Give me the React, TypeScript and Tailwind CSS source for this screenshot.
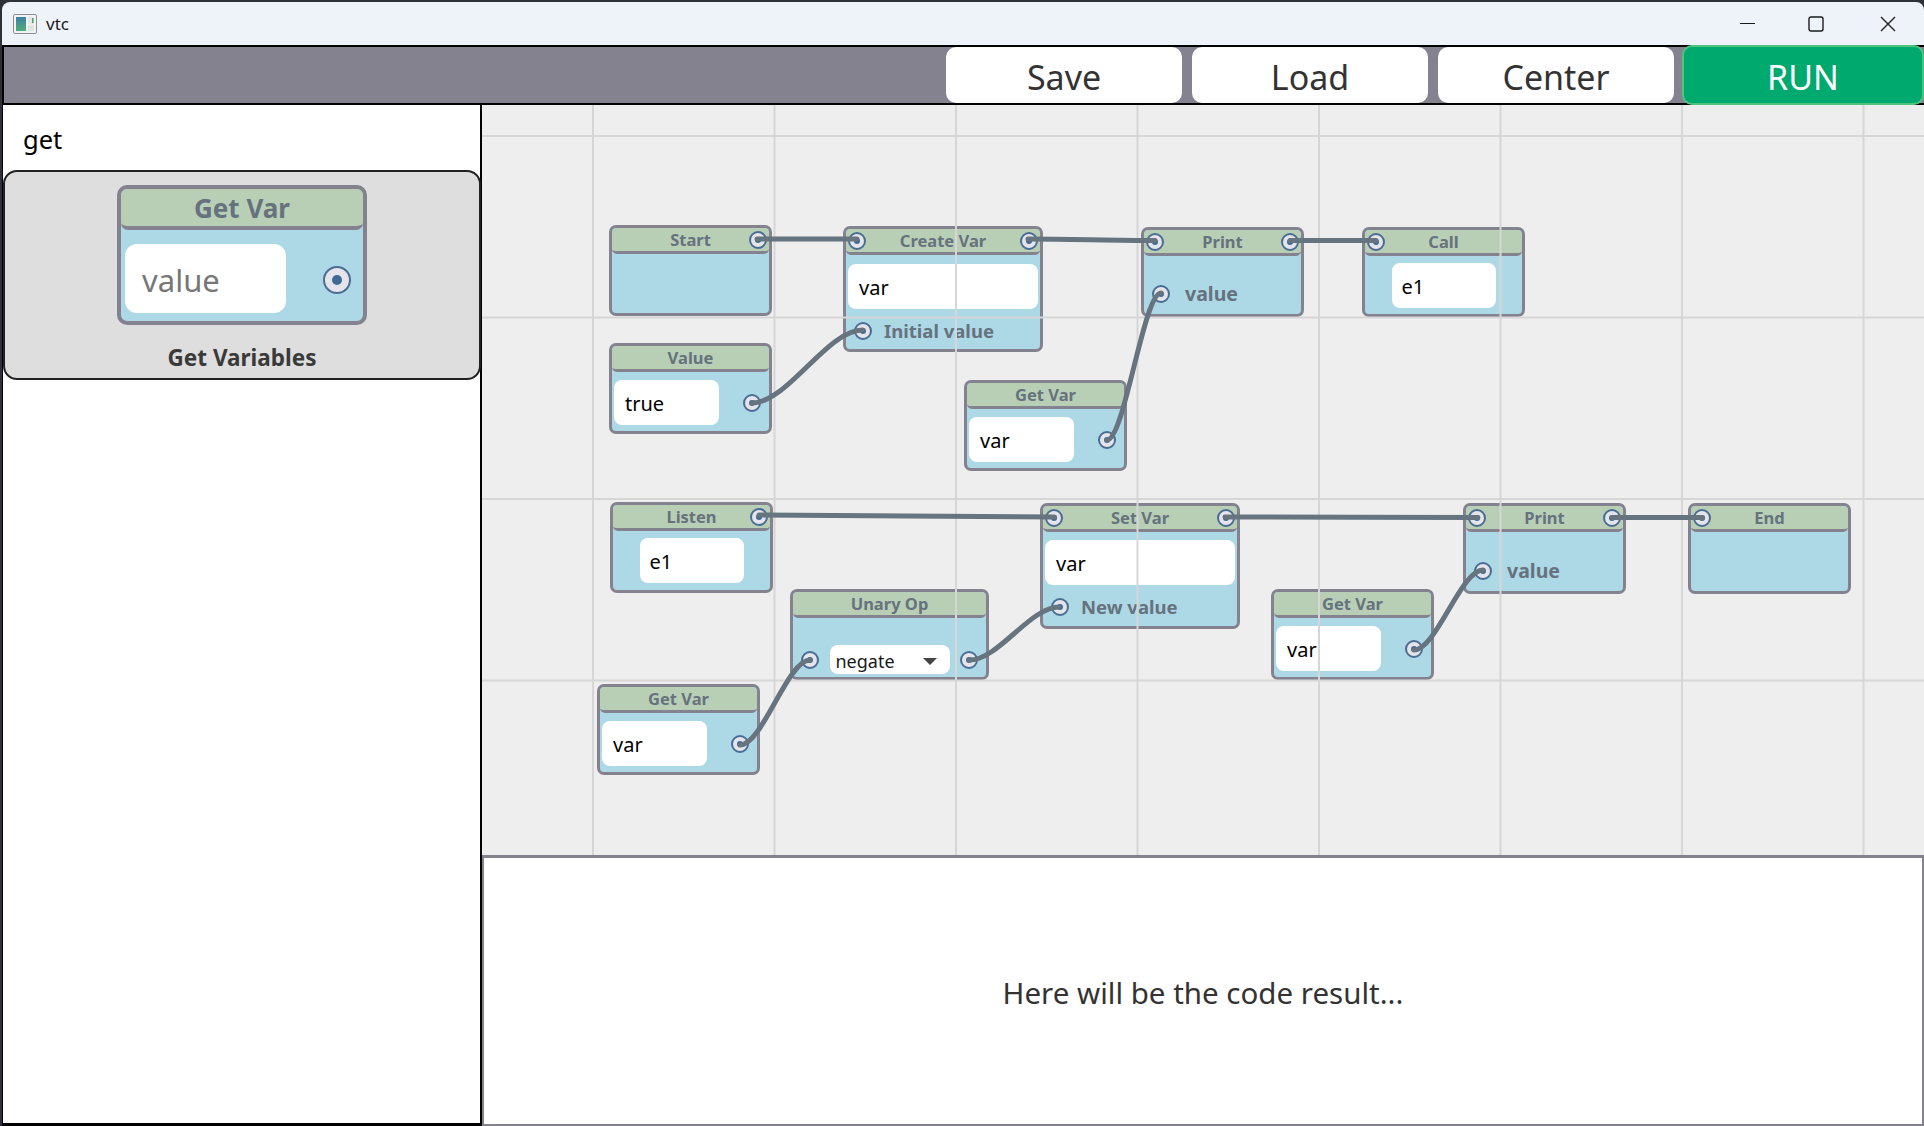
import React from 'react';

// canvas starts at x=482, y=105 of the window, wire coordinates are offset from here
const ORIGIN = { x: 482, y: 105 };

const wires: [number, number, number, number][] = [
  [757, 239, 857, 239],
  [1028, 239, 1155, 240.5],
  [1290, 240.5, 1376, 240.5],
  [752, 403, 862.5, 330],
  [1107, 440, 1161, 293],
  [759, 515, 1054.5, 517],
  [1225, 517, 1478, 517.5],
  [1612, 517.5, 1702.5, 517.5],
  [740, 745, 810, 660],
  [969.5, 660, 1059, 607],
  [1414, 650, 1483, 570],
];

const wirePath = ([x1, y1, x2, y2]: [number, number, number, number]) => {
  const ax = x1 - ORIGIN.x;
  const ay = y1 - ORIGIN.y;
  const bx = x2 - ORIGIN.x;
  const by = y2 - ORIGIN.y;
  const bend = (bx - ax) * 0.32;
  return `M${ax} ${ay} C${ax + bend} ${ay} ${bx - bend} ${by} ${bx} ${by}`;
};

const Port: React.FC = () => (
  <span className="flex h-[18px] w-[18px] shrink-0 items-center justify-center rounded-full border-2 border-[#4a6d94] bg-[#e4e4ea]">
    <span className="h-[6px] w-[6px] rounded-full bg-[#3f6a96]" />
  </span>
);

const Field: React.FC<{ value: string; className?: string }> = ({ value, className }) => (
  <div className={`flex h-[45px] items-center rounded-[8px] bg-white pt-[2px] text-[20px] text-black ${className ?? 'pl-[11px]'}`}>
    {value}
  </div>
);

interface NodeProps {
  title: string;
  className: string;
  input?: boolean;
  output?: boolean;
  children?: React.ReactNode;
}

const Node: React.FC<NodeProps> = ({ title, className, input, output, children }) => (
  <div className={`absolute flex flex-col rounded-[7px] border-[3px] border-[#84828e] bg-[#add8e6] ${className}`}>
    <div className="grid h-[26px] shrink-0 grid-cols-[18px_1fr_18px] items-center rounded-[5px] border-b-[3px] border-[#84828e] bg-[#b8cfb6] px-[2px]">
      <span>{input && <Port />}</span>
      <span className="pt-[1px] text-center text-[16.5px] leading-none font-bold text-[#66727e]">{title}</span>
      <span>{output && <Port />}</span>
    </div>
    {children}
  </div>
);

const PortLabel: React.FC<{ label: string; className: string }> = ({ label, className }) => (
  <div className={`flex items-center pl-[8px] font-bold text-[#66727e] ${className}`}>
    <Port />
    <span className="leading-none">{label}</span>
  </div>
);

const ValueBody: React.FC<{ value: string }> = ({ value }) => (
  <div className="mt-[8px] flex items-center justify-between pr-[8px] pl-[2px]">
    <Field value={value} className="w-[105px] pl-[11px]" />
    <Port />
  </div>
);

const ToolButton: React.FC<{ label: string }> = ({ label }) => (
  <button className="h-[56px] w-[236px] rounded-[10px] bg-white pt-[4px] text-[34px] leading-none text-[#333333]">{label}</button>
);

export default function App() {
  return (
    <div className="h-[1126px] w-[1924px] overflow-hidden bg-[#2e3238] pt-[2px] pl-[2px] font-['Noto_Sans',sans-serif]">
      <div className="flex h-full flex-col overflow-hidden rounded-tl-[8px] rounded-tr-[8px]">
        {/* title bar */}
        <div className="flex h-[43px] shrink-0 items-center bg-[#eef3f9] pr-[28px] pl-[11px]">
          <svg width="24" height="20" viewBox="0 0 24 20" className="shrink-0">
            <rect x="0.5" y="0.5" width="23" height="19" rx="1.5" fill="#f2f2f2" stroke="#8a8f94" />
            <defs>
              <linearGradient id="ic" x1="0" y1="0" x2="0" y2="1">
                <stop offset="0" stopColor="#3f7fa6" />
                <stop offset="1" stopColor="#4fae78" />
              </linearGradient>
            </defs>
            <rect x="3" y="3" width="10" height="14" fill="url(#ic)" />
            <rect x="15" y="3" width="6" height="7" fill="#e4e8e4" />
            <rect x="19" y="4" width="1.5" height="5" fill="#3fa66a" />
            <rect x="15" y="11" width="6" height="6" fill="#dfe4df" />
          </svg>
          <span className="ml-[9px] text-[17px] leading-none text-[#1a1a1a]">vtc</span>
          <div className="ml-auto flex items-center gap-[56px]">
            <svg width="15" height="15" viewBox="0 0 15 15" className="-mr-[3px]">
              <path d="M0 7.5H15" stroke="#1a1a1a" strokeWidth="1.2" />
            </svg>
            <svg width="16" height="16" viewBox="0 0 16 16">
              <rect x="1" y="1" width="14" height="14" rx="2" fill="none" stroke="#1a1a1a" strokeWidth="1.4" />
            </svg>
            <svg width="16" height="16" viewBox="0 0 16 16">
              <path d="M1 1L15 15M15 1L1 15" stroke="#1a1a1a" strokeWidth="1.3" />
            </svg>
          </div>
        </div>

        {/* toolbar */}
        <div className="flex h-[60px] shrink-0 items-center justify-end gap-[10px] border-y-2 border-l-2 border-black bg-[#84828e]">
          <ToolButton label="Save" />
          <ToolButton label="Load" />
          <ToolButton label="Center" />
          <button className="-my-[2px] -ml-[2px] h-[60px] w-[242px] rounded-[10px] border-2 border-[#4ec47e] bg-[#00a96e] pt-[4px] text-[34px] leading-none text-white">
            RUN
          </button>
        </div>

        <div className="flex min-h-0 flex-1">
          {/* sidebar */}
          <aside className="flex w-[480px] shrink-0 flex-col border-r-[2px] border-b-[3px] border-l-[1px] border-black bg-white">
            <div className="flex h-[65px] shrink-0 items-center pt-[4px] pl-[20px] text-[25.5px] text-black">get</div>
            <div className="-mr-[1px] flex h-[210px] shrink-0 flex-col items-center rounded-[14px] border-2 border-[#222222] bg-[#dedede] pt-[13px]">
              <div className="flex h-[140px] w-[250px] shrink-0 flex-col rounded-[10px] border-[4px] border-[#84828e] bg-[#add8e6]">
                <div className="flex h-[41px] shrink-0 items-center justify-center rounded-[7px] border-b-[4px] border-[#84828e] bg-[#b8cfb6] pt-[1px] text-[26px] leading-none font-bold text-[#66727e]">
                  Get Var
                </div>
                <div className="flex items-center justify-between pt-[14px] pr-[12px] pl-[4px]">
                  <div className="flex h-[69px] w-[161px] items-center rounded-[12px] bg-white pt-[4px] pl-[17px] text-[31px] text-[#777777]">value</div>
                  <span className="mt-[2px] flex h-[28px] w-[28px] items-center justify-center rounded-full border-2 border-[#4a6d94] bg-[#e4e4ea]">
                    <span className="h-[10px] w-[10px] rounded-full bg-[#3f6a96]" />
                  </span>
                </div>
              </div>
              <div className="mt-[22px] text-[22.5px] leading-none font-bold text-[#3a3a3a]">Get Variables</div>
            </div>
          </aside>

          <div className="flex min-w-0 flex-1 flex-col">
            {/* node canvas */}
            <div className="relative h-[750px] shrink-0 overflow-hidden bg-[#eeeeee]">
              <Node title="Start" output className="top-[120px] left-[127px] h-[91px] w-[163px]" />
              <Node title="Create Var" input output className="top-[121px] left-[361px] h-[126px] w-[200px]">
                <Field value="var" className="mx-[2px] mt-[9px] pl-[11px]" />
                <PortLabel label="Initial value" className="mt-[13px] gap-[12px] text-[18.5px]" />
              </Node>
              <Node title="Print" input output className="top-[122px] left-[659px] h-[90px] w-[163px]">
                <PortLabel label="value" className="mt-[28px] gap-[15px] text-[19.5px]" />
              </Node>
              <Node title="Call" input className="top-[122px] left-[880px] h-[90px] w-[163px]">
                <Field value="e1" className="mx-auto mt-[7px] w-[104px] pl-[10px]" />
              </Node>
              <Node title="Value" className="top-[238px] left-[127px] h-[91px] w-[163px]">
                <ValueBody value="true" />
              </Node>
              <Node title="Get Var" className="top-[275px] left-[482px] h-[91px] w-[163px]">
                <ValueBody value="var" />
              </Node>
              <Node title="Listen" output className="top-[397px] left-[128px] h-[91px] w-[163px]">
                <Field value="e1" className="mx-auto mt-[7px] w-[104px] pl-[10px]" />
              </Node>
              <Node title="Set Var" input output className="top-[398px] left-[558px] h-[126px] w-[200px]">
                <Field value="var" className="mx-[2px] mt-[8px] pl-[11px]" />
                <PortLabel label="New value" className="mt-[13px] gap-[12px] text-[18.5px]" />
              </Node>
              <Node title="Print" input output className="top-[398px] left-[981px] h-[91px] w-[163px]">
                <PortLabel label="value" className="mt-[29px] gap-[15px] text-[19.5px]" />
              </Node>
              <Node title="End" input className="top-[398px] left-[1206px] h-[91px] w-[163px]" />
              <Node title="Unary Op" className="top-[484px] left-[308px] h-[91px] w-[199px]">
                <div className="mt-[27px] flex items-center justify-between px-[8px]">
                  <Port />
                  <div className="flex h-[29px] w-[120px] items-center justify-between rounded-[8px] bg-white pt-[3px] pr-[13px] pl-[6px] text-[18px] text-[#1a1a1a]">
                    negate
                    <span className="h-0 w-0 border-x-[7px] border-t-[7px] border-x-transparent border-t-[#444444]" />
                  </div>
                  <Port />
                </div>
              </Node>
              <Node title="Get Var" className="top-[484px] left-[789px] h-[91px] w-[163px]">
                <ValueBody value="var" />
              </Node>
              <Node title="Get Var" className="top-[579px] left-[115px] h-[91px] w-[163px]">
                <ValueBody value="var" />
              </Node>

              {/* grid sits on top of the nodes */}
              <div className="pointer-events-none absolute inset-0 bg-[linear-gradient(to_right,#d6d6d6_2px,transparent_2px),linear-gradient(to_bottom,#d6d6d6_2px,transparent_2px)] bg-[size:181.5px_181.5px] bg-[position:110px_30px]" />

              <svg className="pointer-events-none absolute inset-0 h-full w-full" fill="none">
                {wires.map((wire, i) => (
                  <path key={i} d={wirePath(wire)} stroke="#66747f" strokeWidth="5" strokeLinecap="round" />
                ))}
              </svg>
            </div>

            {/* output */}
            <div className="flex flex-1 items-center justify-center border-[2px] border-t-[3px] border-[#84828e] bg-white pt-[4px] text-[29.5px] text-[#333333]">
              Here will be the code result...
            </div>
          </div>
        </div>
      </div>
    </div>
  );
}
